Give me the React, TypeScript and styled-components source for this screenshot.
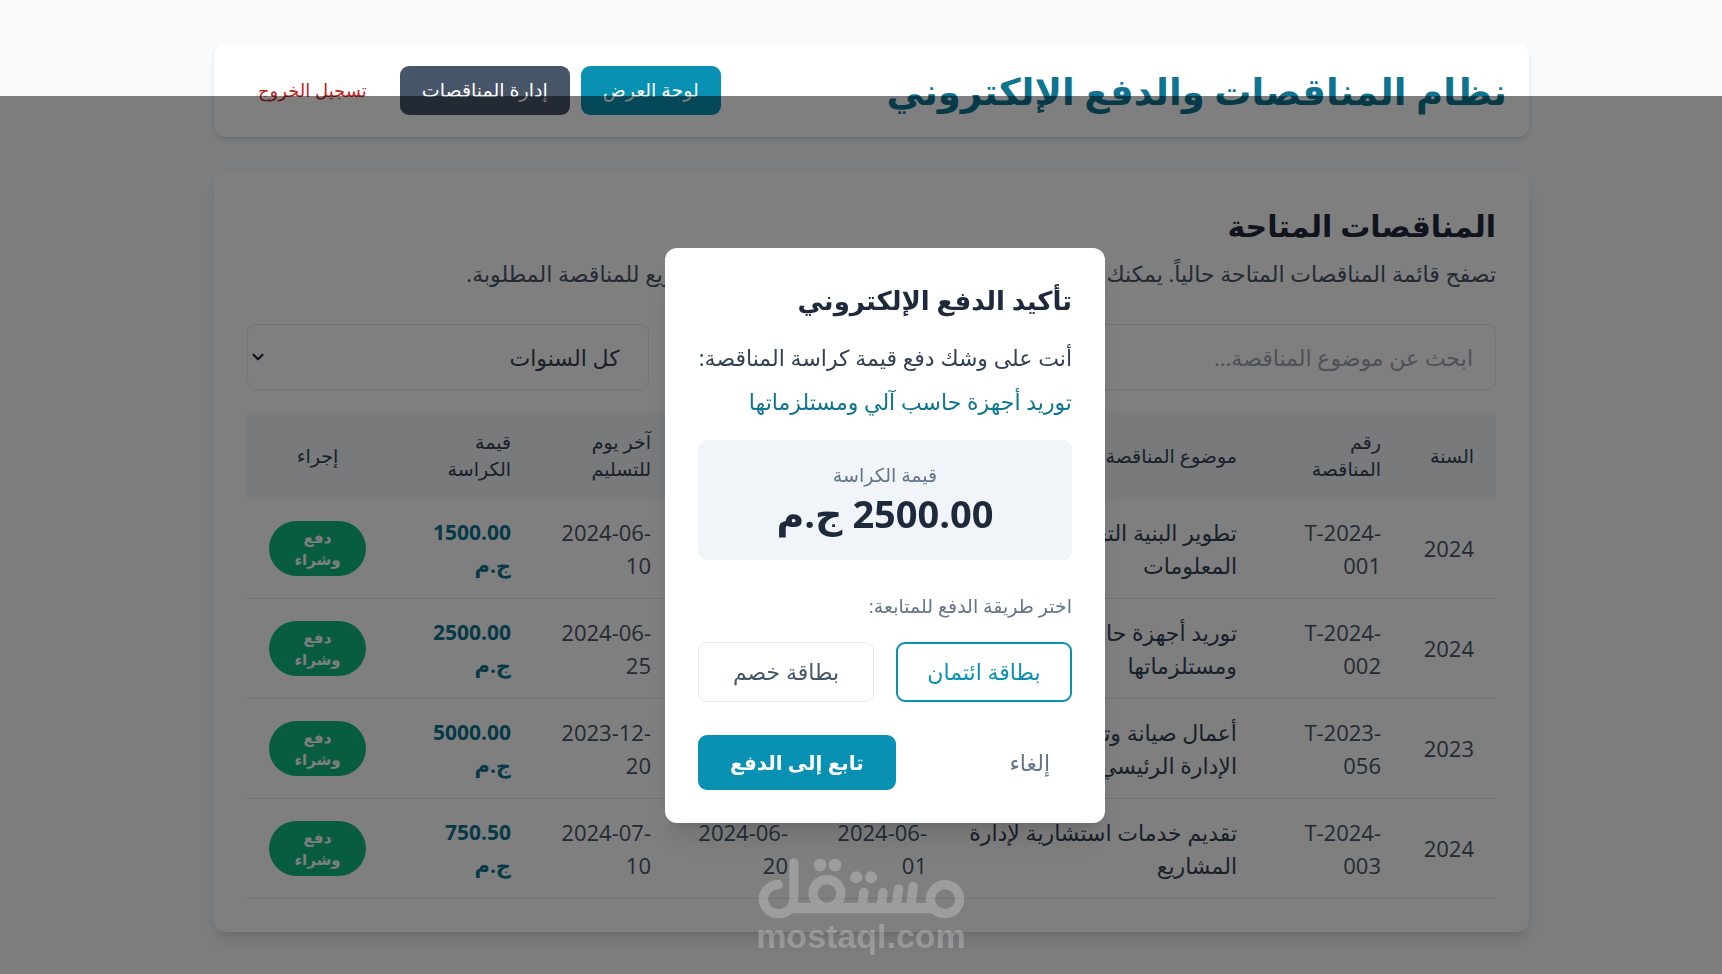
import React, { useState } from "react";
import styled, { createGlobalStyle, css } from "styled-components";
import { ChevronDown } from "lucide-react";

const GlobalStyle = createGlobalStyle`
  *, *::before, *::after { box-sizing: border-box; }
  body {
    margin: 0;
    background: #f8fafc;
    color: #334155;
    font-family: "Open Sans", "DejaVu Sans", sans-serif;
    font-size: 22px;
    line-height: 33px;
  }
  h1, h2, h3, p { margin: 0; }
  button, input, select { font: inherit; color: inherit; }
  button { cursor: pointer; border: 0; background: none; }
`;

const Page = styled.div`
  min-height: 100vh;
  padding: 44px 20px 42px 41px;
`;

const Container = styled.div`
  max-width: 1315px;
  margin: 0 auto;
  display: flex;
  flex-direction: column;
  gap: 34px;
`;

const Header = styled.header`
  display: flex;
  align-items: center;
  justify-content: space-between;
  padding: 22px;
  background: #fff;
  border-radius: 12px;
  box-shadow: 0 4px 7px -1px rgba(0, 0, 0, 0.1), 0 2px 4px -2px rgba(0, 0, 0, 0.1);
`;

const Brand = styled.h1`
  font-size: 37px;
  line-height: 49px;
  font-weight: 700;
  color: #0e7490;
`;

const Nav = styled.nav`
  display: flex;
  gap: 11px;
`;

const NavButton = styled.button<{ $tone: "primary" | "dark" | "plain" }>`
  height: 49px;
  padding: 0 22px;
  border-radius: 9px;
  font-size: 19px;
  line-height: 27px;
  white-space: nowrap;
  ${({ $tone }) =>
    $tone === "primary"
      ? css`background: #0891b2; color: #fff;`
      : $tone === "dark"
        ? css`background: #475569; color: #fff;`
        : css`color: #c5221f; font-size: 18px;`}
`;

const Card = styled.main`
  padding: 33px;
  background: #fff;
  border-radius: 12px;
  box-shadow: 0 11px 17px -3px rgba(0, 0, 0, 0.1), 0 4px 7px -4px rgba(0, 0, 0, 0.1);
`;

const CardTitle = styled.h2`
  font-size: 30px;
  line-height: 44px;
  font-weight: 700;
  color: #1e293b;
`;

const CardIntro = styled.p`
  margin-top: 9px;
  color: #475569;
  white-space: nowrap;
`;

const Filters = styled.div`
  display: grid;
  grid-template-columns: repeat(3, 1fr);
  gap: 22px;
  margin: 34px 0 23px;
`;

const SearchInput = styled.input`
  grid-column: span 2;
  width: 100%;
  height: 66px;
  padding: 0 22px;
  border: 1px solid #e2e8f0;
  border-radius: 9px;
  background: #fff;
  &::placeholder { color: #9ca3af; opacity: 1; }
`;

const SelectBox = styled.div`
  position: relative;
  svg {
    position: absolute;
    left: 2px;
    top: 24px;
    pointer-events: none;
  }
`;

const YearSelect = styled.select`
  appearance: none;
  width: 100%;
  height: 66px;
  padding: 0 28px;
  border: 1px solid #e2e8f0;
  border-radius: 9px;
  background: #fff;
`;

const Table = styled.table`
  width: 100%;
  table-layout: fixed;
  border-collapse: separate;
  border-spacing: 0;
  text-align: right;
`;

const HeadCell = styled.th<{ $center?: boolean }>`
  height: 86px;
  padding: 0 22px;
  background: #f1f5f9;
  color: #334155;
  font-size: 19px;
  line-height: 27px;
  font-weight: 400;
  white-space: nowrap;
  text-align: ${({ $center }) => ($center ? "center" : "right")};
`;

const Cell = styled.td<{ $kind?: "topic" | "price" | "action" }>`
  height: 100px;
  padding: 0 22px;
  border-bottom: 1px solid #e2e8f0;
  color: #475569;
  text-align: right;
  white-space: nowrap;
  ${({ $kind }) => $kind === "topic" && css`color: #334155;`}
  ${({ $kind }) => $kind === "price" && css`color: #0e7490; font-size: 21px; font-weight: 700;`}
  ${({ $kind }) => $kind === "action" && css`text-align: center;`}
`;

const BuyButton = styled.button`
  display: block;
  width: 100%;
  padding: 5px 16px 6px;
  border-radius: 28px;
  background: #10b981;
  color: #fff;
  font-size: 15px;
  line-height: 22px;
  font-weight: 700;
`;

const Overlay = styled.div`
  position: fixed;
  inset: 96px 0 0 0;
  display: flex;
  align-items: center;
  justify-content: center;
  padding-left: 48px;
  background: rgba(0, 0, 0, 0.5);
`;

const Dialog = styled.section`
  width: 100%;
  max-width: 440px;
  padding: 33px;
  background: #fff;
  border-radius: 12px;
  box-shadow: 0 22px 27px -5px rgba(0, 0, 0, 0.1), 0 9px 11px -6px rgba(0, 0, 0, 0.1);
`;

const DialogTitle = styled.h3`
  font-size: 26px;
  line-height: 38px;
  font-weight: 700;
  color: #1e293b;
`;

const DialogText = styled.p<{ $accent?: boolean }>`
  margin-top: ${({ $accent }) => ($accent ? "11px" : "22px")};
  color: ${({ $accent }) => ($accent ? "#0e7490" : "#334155")};
  white-space: nowrap;
`;

const AmountBox = styled.div`
  margin: 22px 0 33px;
  padding: 22px;
  border-radius: 9px;
  background: #f1f5f9;
  text-align: center;
`;

const SmallText = styled.p`
  font-size: 19px;
  line-height: 27px;
  color: #64748b;
`;

const Amount = styled.p`
  font-size: 38px;
  line-height: 49px;
  font-weight: 700;
  color: #1e293b;
`;

const Methods = styled.div`
  display: grid;
  grid-template-columns: 1fr 1fr;
  gap: 22px;
  margin: 22px 0 33px;
`;

const MethodButton = styled.button<{ $active: boolean }>`
  height: 60px;
  padding: 0;
  border-radius: 9px;
  border: ${({ $active }) => ($active ? "2px solid #0891b2" : "1px solid #e2e8f0")};
  background: #fff;
  color: ${({ $active }) => ($active ? "#0891b2" : "#475569")};
`;

const Actions = styled.div`
  display: flex;
  align-items: center;
  justify-content: space-between;
`;

const CancelButton = styled.button`
  height: 55px;
  padding: 0 22px;
  color: #64748b;
`;

const PayButton = styled.button`
  height: 55px;
  padding: 0 32px;
  border-radius: 9px;
  background: #0891b2;
  color: #fff;
  font-size: 20px;
  font-weight: 700;
  white-space: nowrap;
`;

const Watermark = styled.div`
  position: fixed;
  left: 0;
  right: 0;
  bottom: 21px;
  display: flex;
  flex-direction: column;
  align-items: center;
  opacity: 0.24;
  color: #fff;
  pointer-events: none;
  font-family: "Liberation Sans", Arial, sans-serif;
  font-size: 34px;
  line-height: 34px;
  font-weight: 700;
  svg { display: block; }
`;

const columns = [
  { label: ["السنة"], width: 93 },
  { label: ["رقم", "المناقصة"], width: 144 },
  { label: ["موضوع المناقصة"], width: 310 },
  { label: ["تاريخ", "الطرح"], width: 139 },
  { label: ["آخر يوم", "للشراء"], width: 137 },
  { label: ["آخر يوم", "للتسليم"], width: 140 },
  { label: ["قيمة", "الكراسة"], width: 145 },
  { label: ["إجراء"], width: 141 },
];

const tenders = [
  {
    year: "2024",
    number: ["T-2024-", "001"],
    topic: ["تطوير البنية التحتية لتقنية", "المعلومات"],
    dates: [["2024-05-", "15"], ["2024-06-", "05"], ["2024-06-", "10"]],
    price: "1500.00",
  },
  {
    year: "2024",
    number: ["T-2024-", "002"],
    topic: ["توريد أجهزة حاسب آلي", "ومستلزماتها"],
    dates: [["2024-05-", "20"], ["2024-06-", "15"], ["2024-06-", "25"]],
    price: "2500.00",
  },
  {
    year: "2023",
    number: ["T-2023-", "056"],
    topic: ["أعمال صيانة وترميم مبنى", "الإدارة الرئيسي"],
    dates: [["2023-11-", "10"], ["2023-12-", "10"], ["2023-12-", "20"]],
    price: "5000.00",
  },
  {
    year: "2024",
    number: ["T-2024-", "003"],
    topic: ["تقديم خدمات استشارية لإدارة", "المشاريع"],
    dates: [["2024-06-", "01"], ["2024-06-", "20"], ["2024-07-", "10"]],
    price: "750.50",
  },
];

function Lines({ parts }: { parts: string[] }) {
  return (
    <>
      {parts.map((part, i) => (
        <React.Fragment key={part}>
          {i > 0 && <br />}
          {part}
        </React.Fragment>
      ))}
    </>
  );
}

function MostaqlMark() {
  return (
    <svg width="207" height="61" viewBox="290 179 622 184" fill="none" stroke="#fff" strokeWidth="28" strokeLinecap="round" aria-hidden="true">
      <circle cx="853" cy="303" r="44" />
      <path d="M820 330H395" strokeWidth="32" strokeLinecap="butt" />
      <path d="M350 259A45 45 0 0 0 305 304A45 45 0 0 0 350 347C378 347 397 328 397 300V194" />
      <circle cx="497" cy="286" r="42" />
      <path d="M608 283L603 325M666 283L660 325M713 272L705 325M757 265L749 325" />
      <g fill="#fff" stroke="none">
        <circle cx="476" cy="200" r="19" />
        <circle cx="521" cy="200" r="19" />
        <circle cx="585" cy="237" r="18" />
        <circle cx="630" cy="237" r="18" />
      </g>
    </svg>
  );
}

export default function App() {
  const [method, setMethod] = useState("credit");

  return (
    <div dir="rtl" lang="ar">
      <GlobalStyle />
      <Page>
        <Container>
          <Header>
            <Brand>نظام المناقصات والدفع الإلكتروني</Brand>
            <Nav>
              <NavButton $tone="primary">لوحة العرض</NavButton>
              <NavButton $tone="dark">إدارة المناقصات</NavButton>
              <NavButton $tone="plain">تسجيل الخروج</NavButton>
            </Nav>
          </Header>

          <Card>
            <CardTitle>المناقصات المتاحة</CardTitle>
            <CardIntro>
              تصفح قائمة المناقصات المتاحة حالياً. يمكنك البحث والتصفية حسب سنة الطرح، أو الدفع السريع للمناقصة المطلوبة.
            </CardIntro>
            <Filters>
              <SearchInput type="search" aria-label="ابحث عن موضوع المناقصة" placeholder="ابحث عن موضوع المناقصة..." />
              <SelectBox>
                <YearSelect aria-label="السنة" defaultValue="all">
                  <option value="all">كل السنوات</option>
                  <option value="2024">2024</option>
                  <option value="2023">2023</option>
                </YearSelect>
                <ChevronDown size={18} color="#1e293b" strokeWidth={3} />
              </SelectBox>
            </Filters>

            <Table>
              <colgroup>
                {columns.map((column, i) => (
                  <col key={i} width={column.width} />
                ))}
              </colgroup>
              <thead>
                <tr>
                  {columns.map((column, i) => (
                    <HeadCell key={i} scope="col" $center={i === columns.length - 1}>
                      <Lines parts={column.label} />
                    </HeadCell>
                  ))}
                </tr>
              </thead>
              <tbody>
                {tenders.map((tender) => (
                  <tr key={tender.number.join("")}>
                    <Cell>{tender.year}</Cell>
                    <Cell dir="ltr"><Lines parts={tender.number} /></Cell>
                    <Cell $kind="topic"><Lines parts={tender.topic} /></Cell>
                    {tender.dates.map((date, i) => (
                      <Cell key={i} dir="ltr"><Lines parts={date} /></Cell>
                    ))}
                    <Cell $kind="price"><Lines parts={[tender.price, "ج.م"]} /></Cell>
                    <Cell $kind="action">
                      <BuyButton>
                        <Lines parts={["دفع", "وشراء"]} />
                      </BuyButton>
                    </Cell>
                  </tr>
                ))}
              </tbody>
            </Table>
          </Card>
        </Container>
      </Page>

      <Overlay>
        <Dialog role="dialog" aria-modal="true" aria-labelledby="pay-title">
          <DialogTitle id="pay-title">تأكيد الدفع الإلكتروني</DialogTitle>
          <DialogText>أنت على وشك دفع قيمة كراسة المناقصة:</DialogText>
          <DialogText $accent>توريد أجهزة حاسب آلي ومستلزماتها</DialogText>
          <AmountBox>
            <SmallText>قيمة الكراسة</SmallText>
            <Amount>2500.00 ج.م</Amount>
          </AmountBox>
          <SmallText>اختر طريقة الدفع للمتابعة:</SmallText>
          <Methods>
            <MethodButton $active={method === "credit"} aria-pressed={method === "credit"} onClick={() => setMethod("credit")}>
              بطاقة ائتمان
            </MethodButton>
            <MethodButton $active={method === "debit"} aria-pressed={method === "debit"} onClick={() => setMethod("debit")}>
              بطاقة خصم
            </MethodButton>
          </Methods>
          <Actions>
            <CancelButton>إلغاء</CancelButton>
            <PayButton>تابع إلى الدفع</PayButton>
          </Actions>
        </Dialog>
      </Overlay>

      <Watermark dir="ltr">
        <MostaqlMark />
        <span>mostaql.com</span>
      </Watermark>
    </div>
  );
}
